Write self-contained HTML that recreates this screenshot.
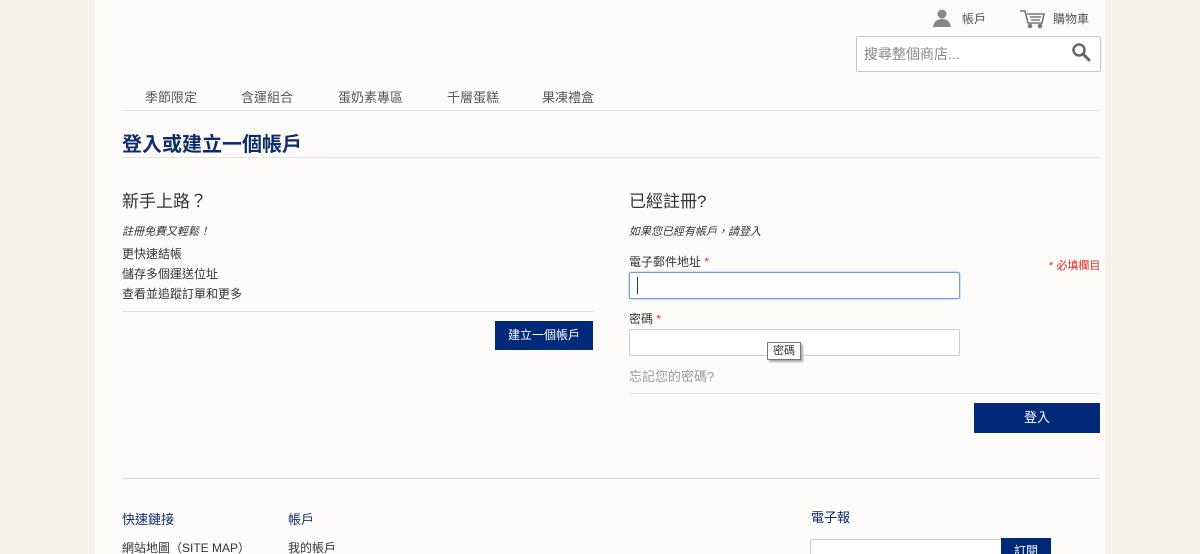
<!DOCTYPE html>
<html style="width:1200px;height:554px;overflow:hidden"><head><meta charset="utf-8"><style>
*{margin:0;padding:0;box-sizing:border-box}
body{width:1200px;height:554px;overflow:hidden;background:#f5f2ea;font-family:"Liberation Sans","Noto Sans CJK TC",sans-serif;color:#333;position:relative}
.c{position:absolute;left:95px;top:0;width:1010px;height:554px;background:#fdfcfa}
.a{position:absolute;white-space:nowrap}
.hr{position:absolute;height:1px;background:#e6e4e0}
.nav span{position:absolute;top:87px;font-size:13px;color:#555}
.btn{position:absolute;background:#00297a;color:#fff;font-size:12px;text-align:center}
.in{position:absolute;background:#fff;border:1px solid #ccc;border-radius:2px}
</style></head><body>
<div class="c"></div>
<svg class="a" style="left:932px;top:9px" width="20" height="18" viewBox="0 0 20 18"><circle cx="10" cy="5" r="4.5" fill="#888"/><path d="M1 18 Q2 10 10 10 Q18 10 19 18Z" fill="#888"/></svg>
<span class="a" style="left:962px;top:10px;font-size:12px;color:#555">帳戶</span>
<svg class="a" style="left:1019px;top:9px" width="27" height="20" viewBox="0 0 27 20" fill="none" stroke="#777" stroke-width="1.6"><path d="M1 2h5l3 12h14l2-9H8"/><path d="M11 8h11M12 11h9"/><circle cx="11" cy="17" r="1.5" fill="#777"/><circle cx="21" cy="17" r="1.5" fill="#777"/></svg>
<span class="a" style="left:1053px;top:10px;font-size:12px;color:#555">購物車</span>
<div class="in" style="left:856px;top:36px;width:245px;height:36px;border-color:#c8c8c8"></div>
<span class="a" style="left:864px;top:44px;font-size:14px;color:#888">搜尋整個商店...</span>
<svg class="a" style="left:1071px;top:42px" width="20" height="20" viewBox="0 0 20 20"><circle cx="8" cy="8" r="5.5" fill="none" stroke="#666" stroke-width="2.5"/><path d="M12 12l6 6" stroke="#666" stroke-width="3" stroke-linecap="round"/></svg>
<div class="nav"><span style="left:145px">季節限定</span><span style="left:241px">含運組合</span><span style="left:338px">蛋奶素專區</span><span style="left:447px">千層蛋糕</span><span style="left:542px">果凍禮盒</span></div>
<div class="hr" style="left:122px;top:110px;width:978px"></div>
<span class="a" style="left:122px;top:128px;font-size:20px;color:#0d2d6c;font-weight:bold">登入或建立一個帳戶</span>
<div class="hr" style="left:122px;top:157px;width:978px"></div>
<span class="a" style="left:122px;top:187px;font-size:17px;color:#333">新手上路？</span>
<span class="a" style="left:122px;top:223px;font-size:11px;font-style:italic;color:#333">註冊免費又輕鬆！</span>
<span class="a" style="left:122px;top:245px;font-size:12px">更快速結帳</span>
<span class="a" style="left:122px;top:265px;font-size:12px">儲存多個運送位址</span>
<span class="a" style="left:122px;top:285px;font-size:12px">查看並追蹤訂單和更多</span>
<div class="hr" style="left:122px;top:311px;width:471px"></div>
<div class="btn" style="left:495px;top:321px;width:98px;height:29px;line-height:29px">建立一個帳戶</div>
<span class="a" style="left:629px;top:187px;font-size:17px">已經註冊?</span>
<span class="a" style="left:629px;top:223px;font-size:11px;font-style:italic">如果您已經有帳戶，請登入</span>
<span class="a" style="left:629px;top:253px;font-size:12px">電子郵件地址 <span style="color:#e02b27">*</span></span>
<span class="a" style="left:1049px;top:257px;font-size:11px;color:#e02b27">* 必填欄目</span>
<div class="in" style="left:629px;top:272px;width:331px;height:27px;border-color:#6a9ee0;box-shadow:0 0 2px #8ab4ef"></div>
<div class="a" style="left:637px;top:277px;width:1px;height:17px;background:#333"></div>
<span class="a" style="left:629px;top:310px;font-size:12px">密碼 <span style="color:#e02b27">*</span></span>
<div class="in" style="left:629px;top:329px;width:331px;height:27px"></div>
<div class="a" style="left:767px;top:342px;width:34px;height:18px;background:#fff;border:1px solid #777;box-shadow:2px 2px 2px #aaa;font-size:11px;line-height:16px;text-align:center">密碼</div>
<span class="a" style="left:629px;top:366px;font-size:13px;color:#999">忘記您的密碼?</span>
<div class="hr" style="left:629px;top:393px;width:471px"></div>
<div class="btn" style="left:974px;top:403px;width:126px;height:30px;line-height:30px;font-size:13px">登入</div>
<div class="hr" style="left:122px;top:478px;width:978px;background:#d8d6d2"></div>
<span class="a" style="left:122px;top:509px;font-size:13px;color:#0d2d6c">快速鏈接</span>
<span class="a" style="left:288px;top:509px;font-size:13px;color:#0d2d6c">帳戶</span>
<span class="a" style="left:811px;top:507px;font-size:13px;color:#0d2d6c">電子報</span>
<span class="a" style="left:122px;top:539px;font-size:12px">網站地圖（SITE MAP）</span>
<span class="a" style="left:288px;top:539px;font-size:12px">我的帳戶</span>
<div class="in" style="left:810px;top:539px;width:192px;height:30px"></div>
<div class="btn" style="left:1001px;top:538px;width:50px;height:30px;line-height:26px">訂閱</div>
</body></html>
